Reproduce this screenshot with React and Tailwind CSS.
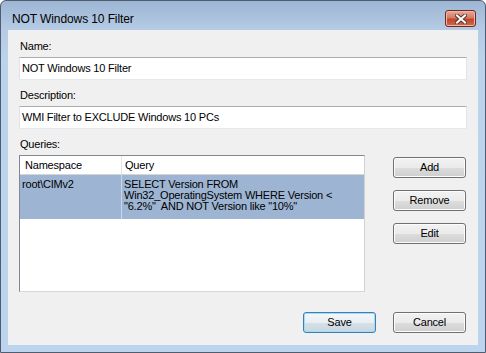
import React from 'react';

const font = { fontFamily: '"Liberation Sans", Arial, sans-serif' };

const WinButton = ({ children, primary, className = '' }) => (
  <button
    className={
      'h-[21px] w-[73px] rounded-[3px] border text-[11px] leading-none text-black tracking-[-0.2px] ' +
      (primary
        ? 'border-[#3c7fb1] bg-[linear-gradient(to_bottom,#f4f8fb_0%,#e9eef3_50%,#d6e0e8_51%,#cad6e0_100%)] shadow-[inset_0_0_0_1px_#9fdcf8] '
        : 'border-[#707070] bg-[linear-gradient(to_bottom,#f2f2f2_0%,#ebebeb_50%,#dddddd_51%,#cfcfcf_100%)] shadow-[inset_0_0_0_1px_#fcfcfc] ') +
      className
    }
  >
    {children}
  </button>
);

const TextBox = ({ value }) => (
  <div className="h-[23px] border border-t-[#abadb3] border-l-[#e2e3ea] border-r-[#e2e3ea] border-b-[#e3e9ef] bg-white flex items-center pl-[2px] text-[11px] tracking-[-0.2px] text-black">
    {value}
  </div>
);

const Label = ({ children, className = '' }) => (
  <div className={'h-[13px] leading-[13px] pl-[1px] text-[11px] tracking-[-0.2px] text-black ' + className}>
    {children}
  </div>
);

const CloseGlyph = () => (
  <svg width="12" height="10" viewBox="0 0 12 10">
    <path d="M2 1.5 L10 8.5 M10 1.5 L2 8.5" stroke="#5a3a34" strokeWidth="4" strokeLinecap="square" />
    <path d="M2 1.5 L10 8.5 M10 1.5 L2 8.5" stroke="#ffffff" strokeWidth="2" strokeLinecap="square" />
  </svg>
);

export default function App() {
  return (
    <div className="w-[486px] h-[353px] bg-white" style={font}>
      <div className="w-[486px] h-[353px] rounded-t-[6px] border border-[#4f5d6e] bg-[linear-gradient(to_bottom,#9db6d4_0px,#b6cce6_30px,#bcd3ec_60px,#bcd4ed_100%)] flex flex-col overflow-hidden">
        {/* title bar */}
        <div className="h-[29px] shrink-0 flex items-center justify-between pl-[11px] pr-[9px] pt-[6px]">
          <span className="text-[12px] text-black tracking-[-0.1px]">NOT Windows 10 Filter</span>
          <div className="w-[31px] h-[17px] rounded-[3px] border border-[#6b2b20] bg-[linear-gradient(to_bottom,#e9a89a_0%,#d67a64_45%,#c2452b_55%,#cf6a4f_100%)] shadow-[inset_0_0_0_1px_#f0b6a8] flex items-center justify-center">
            <CloseGlyph />
          </div>
        </div>

        {/* client area */}
        <div className="mx-[7px] h-[315px] bg-[#f0f0f0] flex flex-col px-[11px] pt-[10px]">
          <Label>Name:</Label>
          <div className="mt-[4px]">
            <TextBox value="NOT Windows 10 Filter" />
          </div>

          <Label className="mt-[9px]">Description:</Label>
          <div className="mt-[4px]">
            <TextBox value="WMI Filter to EXCLUDE Windows 10 PCs" />
          </div>

          <Label className="mt-[9px]">Queries:</Label>
          <div className="mt-[4px] flex">
            <div className="w-[346px] h-[137px] border border-t-[#828790] border-l-[#828790] border-r-[#d0d0d0] border-b-[#d8d8d8] bg-white flex flex-col text-[11px] tracking-[-0.2px] text-black">
              <div className="h-[19px] flex border-b border-[#d5d5d5] bg-white">
                <div className="w-[102px] pl-[5px] flex items-center border-r border-[#dfe2e6]">Namespace</div>
                <div className="flex-1 pl-[3px] flex items-center">Query</div>
              </div>
              <div className="h-[44px] flex bg-[#9db5d3] leading-[11px]">
                <div className="w-[102px] pl-[2px] pt-[4px] border-r border-[#c9d7e8]">root\CIMv2</div>
                <div className="flex-1 pl-[2px] pt-[4px]">
                  SELECT Version FROM
                  <br />
                  Win32_OperatingSystem WHERE Version &lt;
                  <br />
                  "6.2%"&nbsp; AND NOT Version like "10%"
                </div>
              </div>
            </div>

            <div className="ml-[28px] pt-[2px] flex flex-col gap-[12px]">
              <WinButton className="h-[20px]">Add</WinButton>
              <WinButton className="h-[20px]">Remove</WinButton>
              <WinButton className="h-[20px]">Edit</WinButton>
            </div>
          </div>

          <div className="mt-[20px] flex justify-end gap-[17px] pr-[1px]">
            <WinButton primary>Save</WinButton>
            <WinButton>Cancel</WinButton>
          </div>
        </div>
      </div>
    </div>
  );
}
